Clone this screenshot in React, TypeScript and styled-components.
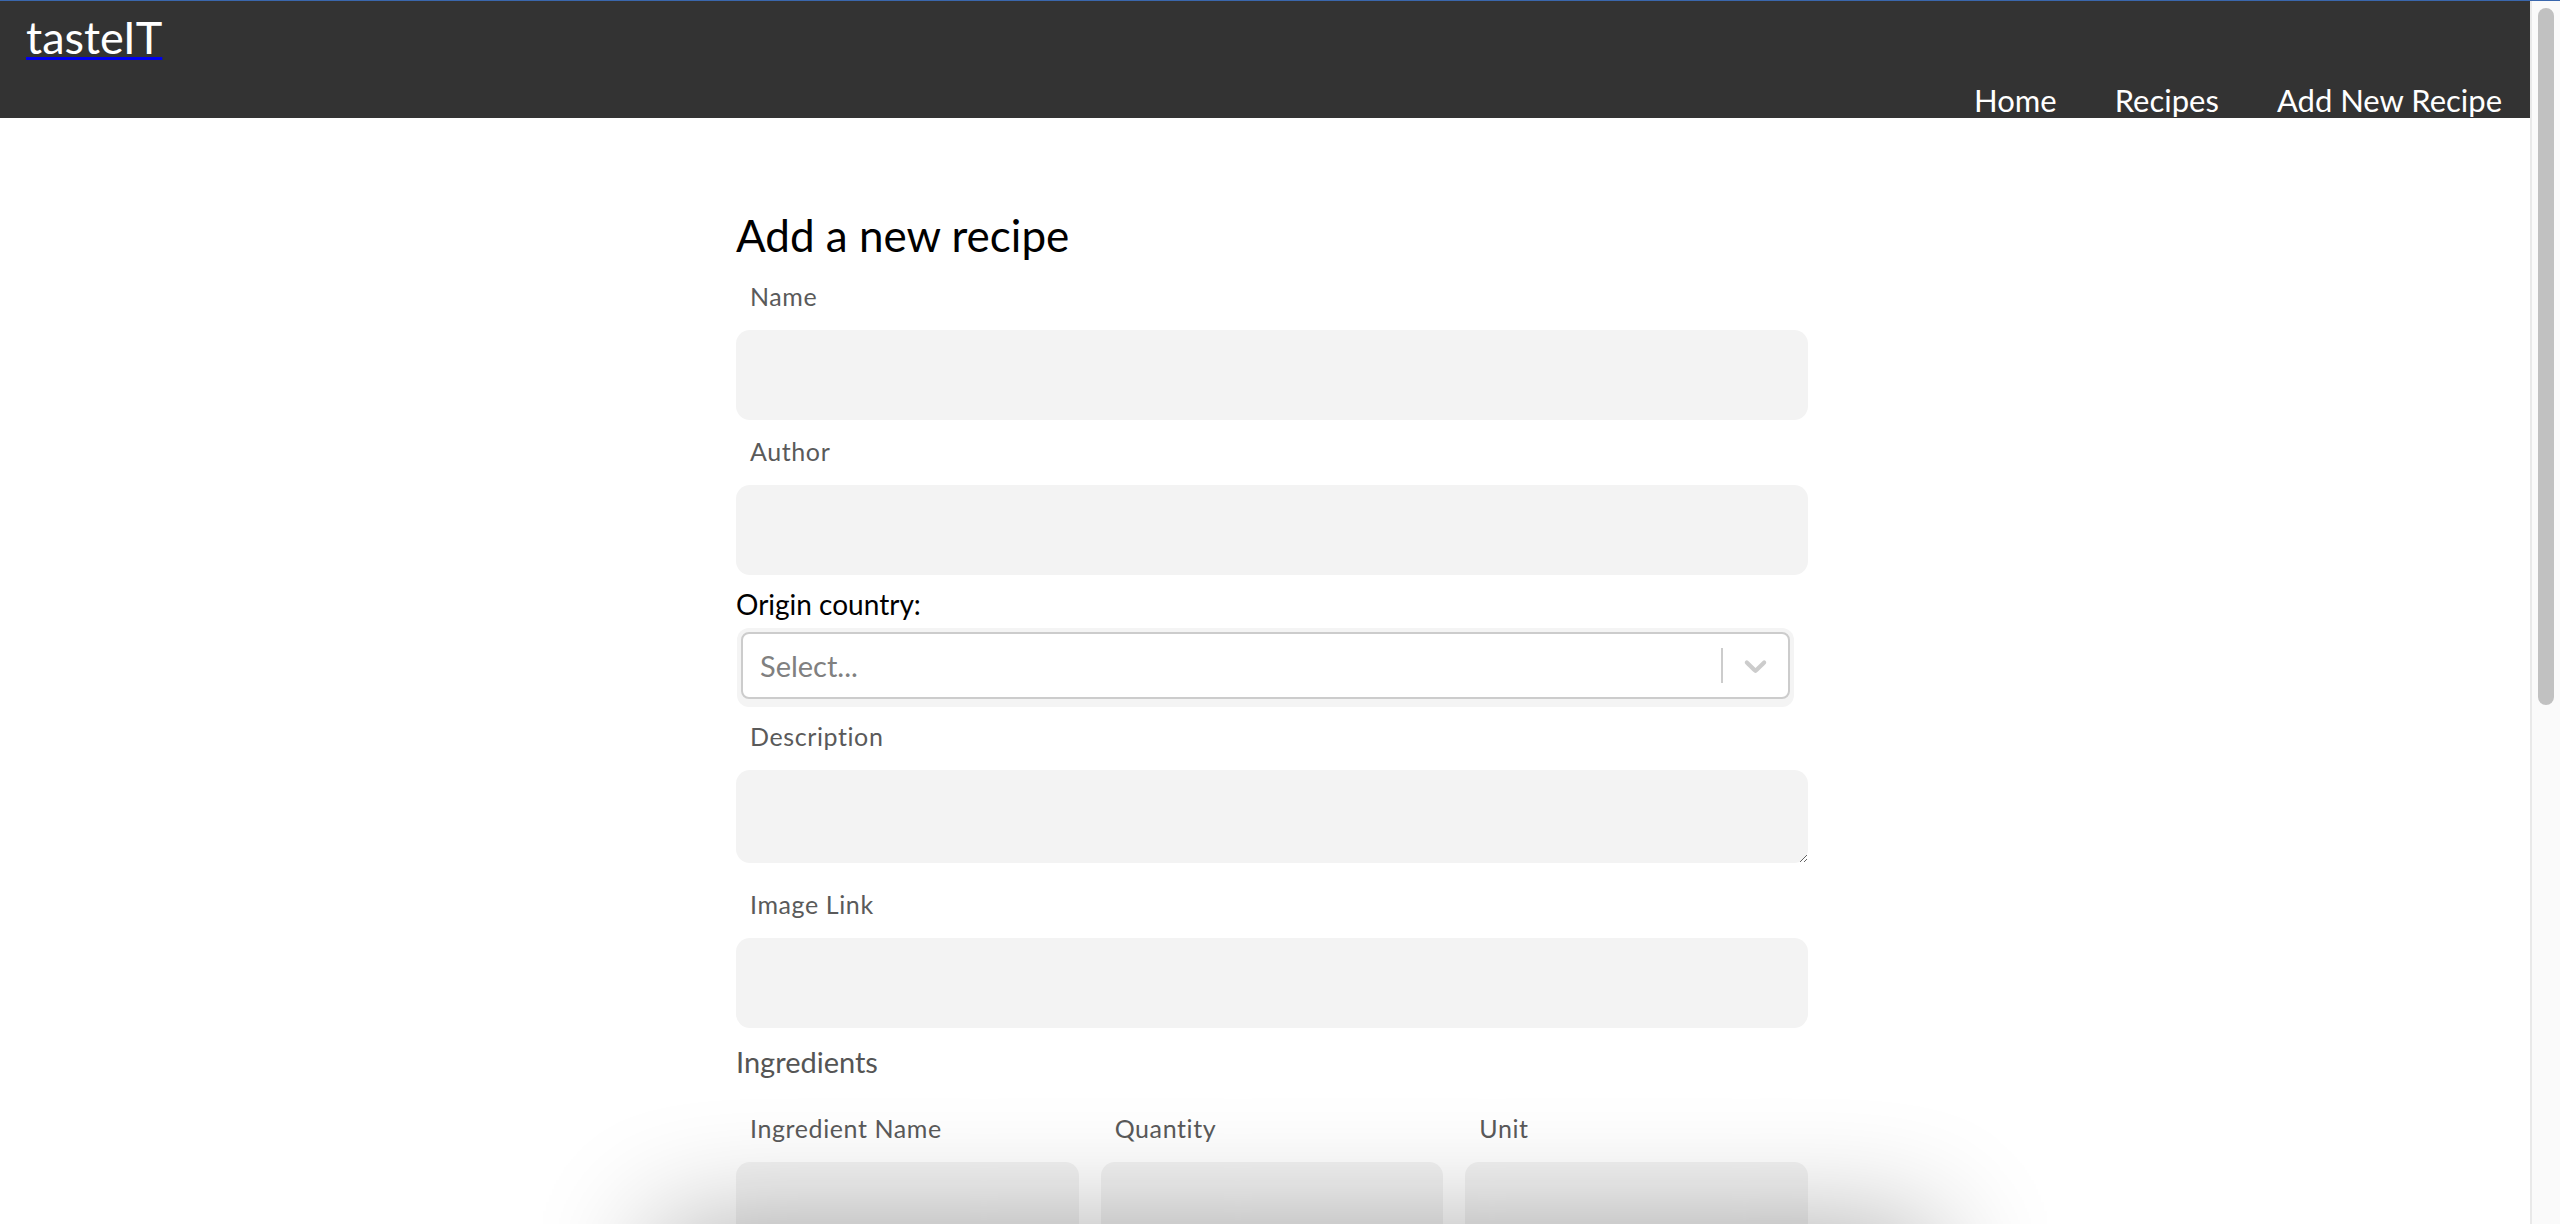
import React from "react";
import styled, { createGlobalStyle } from "styled-components";

const Global = createGlobalStyle`
  html, body { margin: 0; padding: 0; height: 100%; overflow: hidden; background: #fff; }
  body { font-family: Lato, "Noto Sans", sans-serif; }
  #root { height: 100%; }
  *, *::before, *::after { box-sizing: border-box; }
`;

const Window = styled.div`
  height: 100vh;
  display: flex;
  flex-direction: column;
  border-top: 1px solid #3a67ad;
`;

const Viewport = styled.div`
  flex: 1;
  min-height: 0;
  display: flex;
`;

const Page = styled.div`
  flex: 1;
  min-width: 0;
  overflow: hidden;
  background: #fff;
`;

const Header = styled.header`
  height: 117px;
  background: #333333;
  display: flex;
  justify-content: space-between;
  padding: 0 28px 0 26px;
`;

const Logo = styled.a`
  align-self: flex-start;
  margin-top: 9px;
  font-size: 45px;
  line-height: 54px;
  color: #0000ee;
  text-decoration: underline;
  text-decoration-thickness: 3px;
  text-underline-offset: 3px;
`;

const LogoText = styled.span`
  color: #ffffff;
`;

const Nav = styled.nav`
  align-self: flex-end;
  display: flex;
  gap: 58px;
`;

const NavLink = styled.a`
  color: #ffffff;
  font-size: 31px;
  line-height: 36px;
  text-decoration: none;
`;

const Main = styled.main`
  display: flex;
  justify-content: center;
  padding: 92px 0 0 14px;
`;

const Form = styled.form`
  width: 1072px;
  display: flex;
  flex-direction: column;
`;

const Title = styled.h2`
  margin: 0 0 22px;
  font-size: 44px;
  line-height: 50px;
  font-weight: 400;
  color: #000;
`;

const Field = styled.div<{ $top?: number }>`
  display: flex;
  flex-direction: column;
  margin-top: ${(p) => p.$top ?? 0}px;
`;

const Label = styled.label`
  font-size: 25px;
  line-height: 29px;
  letter-spacing: 0.6px;
  color: #5a5a5a;
  padding-left: 14px;
  margin-bottom: 19px;
`;

const StrongLabel = styled.label`
  font-size: 28px;
  line-height: 34px;
  color: #000;
  margin-bottom: 11px;
`;

const TextInput = styled.input`
  display: block;
  width: 100%;
  height: 90px;
  border: none;
  outline: none;
  border-radius: 14px;
  background: #f3f3f3;
  padding: 0 16px;
  font: inherit;
  font-size: 24px;
`;

const TextArea = styled.textarea`
  display: block;
  width: 100%;
  height: 93px;
  border: none;
  outline: none;
  border-radius: 14px;
  background: #f3f3f3;
  padding: 12px 16px;
  font: inherit;
  font-size: 24px;
  resize: vertical;
`;

const SelectBox = styled.div`
  margin-left: 5px;
  width: 1049px;
  height: 67px;
  display: flex;
  align-items: stretch;
  border: 2px solid #cccccc;
  border-radius: 8px;
  background: #fff;
  box-shadow: 0 0 0 4px #f4f4f4, 0 4px 0 4px #f4f4f4;
`;

const Placeholder = styled.div`
  flex: 1;
  display: flex;
  align-items: center;
  padding-left: 17px;
  font-size: 29px;
  color: #808080;
`;

const Separator = styled.span`
  width: 2px;
  margin: 14px 0;
  background: #cccccc;
`;

const Indicator = styled.div`
  display: flex;
  align-items: center;
  padding: 0 14px;
  color: #cccccc;
`;

const SectionTitle = styled.h3`
  margin: 17px 0 0;
  font-size: 29px;
  line-height: 34px;
  font-weight: 400;
  color: #555;
`;

const IngredientGrid = styled.div`
  margin-top: 35px;
  display: grid;
  grid-template-columns: repeat(3, 1fr);
  gap: 22px;
`;

const ScrollTrack = styled.div`
  width: 30px;
  flex: none;
  background: #fafafa;
  border-left: 2px solid #e9e9e9;
  padding: 7px 4px 0 6px;
`;

const ScrollThumb = styled.div`
  width: 16px;
  height: 697px;
  border-radius: 8px;
  background: #c1c1c1;
`;

const BottomShade = styled.div`
  position: fixed;
  left: 655px;
  width: 1280px;
  bottom: -200px;
  height: 200px;
  box-shadow: 0 0 120px rgba(0, 0, 0, 0.32);
  pointer-events: none;
  z-index: 10;
`;

const Chevron = () => (
  <svg width="37" height="37" viewBox="0 0 20 20" fill="currentColor" aria-hidden="true">
    <path d="M4.516 7.548c0.436-0.446 1.043-0.481 1.576 0l3.908 3.747 3.908-3.747c0.533-0.481 1.141-0.446 1.574 0 0.436 0.445 0.408 1.197 0 1.615-0.406 0.418-4.695 4.502-4.695 4.502-0.217 0.223-0.502 0.335-0.787 0.335s-0.57-0.112-0.789-0.335c0 0-4.287-4.084-4.695-4.502s-0.436-1.17 0-1.615z" />
  </svg>
);

export default function App() {
  return (
    <>
      <Global />
      <Window>
        <Viewport>
          <Page>
            <Header>
              <Logo href="#">
                <LogoText>tasteIT</LogoText>
              </Logo>
              <Nav>
                <NavLink href="#">Home</NavLink>
                <NavLink href="#">Recipes</NavLink>
                <NavLink href="#">Add New Recipe</NavLink>
              </Nav>
            </Header>
            <Main>
              <Form onSubmit={(e) => e.preventDefault()}>
                <Title>Add a new recipe</Title>
                <Field>
                  <Label>Name</Label>
                  <TextInput type="text" />
                </Field>
                <Field $top={17}>
                  <Label>Author</Label>
                  <TextInput type="text" />
                </Field>
                <Field $top={12}>
                  <StrongLabel>Origin country:</StrongLabel>
                  <SelectBox>
                    <Placeholder>Select...</Placeholder>
                    <Separator />
                    <Indicator>
                      <Chevron />
                    </Indicator>
                  </SelectBox>
                </Field>
                <Field $top={23}>
                  <Label>Description</Label>
                  <TextArea />
                </Field>
                <Field $top={27}>
                  <Label>Image Link</Label>
                  <TextInput type="text" />
                </Field>
                <SectionTitle>Ingredients</SectionTitle>
                <IngredientGrid>
                  <Field>
                    <Label>Ingredient Name</Label>
                    <TextInput type="text" />
                  </Field>
                  <Field>
                    <Label>Quantity</Label>
                    <TextInput type="text" />
                  </Field>
                  <Field>
                    <Label>Unit</Label>
                    <TextInput type="text" />
                  </Field>
                </IngredientGrid>
              </Form>
            </Main>
          </Page>
          <ScrollTrack>
            <ScrollThumb />
          </ScrollTrack>
        </Viewport>
        <BottomShade />
      </Window>
    </>
  );
}
